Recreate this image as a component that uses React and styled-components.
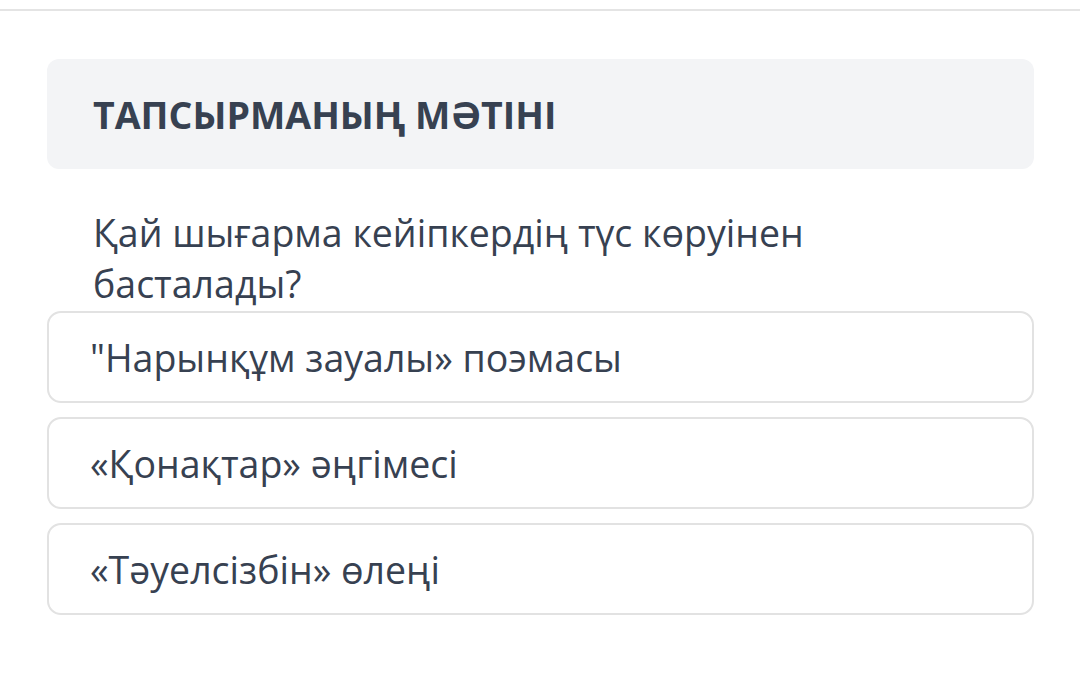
import * as React from 'react';
import styled, { createGlobalStyle } from 'styled-components';

const GlobalStyle = createGlobalStyle`
    html, body {
        margin: 0;
        padding: 0;
        background: #ffffff;
        font-family: "Open Sans", "Noto Sans", sans-serif;
        color: #374151;
    }
`;

const TopRule = styled.div`
    margin-top: 9px;
    height: 2px;
    background-color: #e4e4e4;
`;

const Page = styled.div`
    padding: 48px 46px 0 47px;
`;

const Header = styled.div`
    height: 110px;
    display: flex;
    align-items: center;
    padding: 0 46px;
    background-color: #f3f4f6;
    border-radius: 12px;
`;

const HeaderTitle = styled.h2`
    margin: 0;
    font-size: 37.5px;
    font-weight: 700;
    color: #374151;
`;

const Question = styled.p`
    margin: 38px 0 0;
    padding: 0 200px 0 46px;
    font-size: 37.5px;
    line-height: 51px;
    color: #374151;
`;

const Options = styled.div`
    display: flex;
    flex-direction: column;
    gap: 14px;
    margin-top: 2px;
`;

const Option = styled.div`
    height: 88px;
    display: flex;
    align-items: center;
    padding: 0 41px;
    border: 2px solid #e2e2e2;
    border-radius: 14px;
    font-size: 37.5px;
    color: #374151;
`;

const answers = [
    '"Нарынқұм зауалы» поэмасы',
    '«Қонақтар» әңгімесі',
    '«Тәуелсізбін» өлеңі',
];

export default () => (
    <>
        <GlobalStyle />
        <TopRule />
        <Page>
            <Header>
                <HeaderTitle>ТАПСЫРМАНЫҢ МӘТІНІ</HeaderTitle>
            </Header>
            <Question>Қай шығарма кейіпкердің түс көруінен басталады?</Question>
            <Options>
                {answers.map(a => (
                    <Option key={a}>{a}</Option>
                ))}
            </Options>
        </Page>
    </>
);
